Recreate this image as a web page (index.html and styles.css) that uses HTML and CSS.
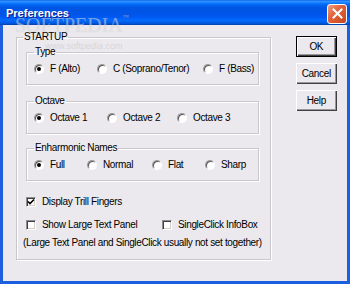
FILE: index.html
```html
<!DOCTYPE html>
<html>
<head>
<meta charset="utf-8">
<link rel="stylesheet" href="styles.css">
</head>
<body>
<div class="window">
  <div class="titlebar">
    <span class="title">Preferences</span>
    <span class="close"><svg width="11" height="11" viewBox="0 0 11 11"><path d="M1.5 1.5 L9.5 9.5 M9.5 1.5 L1.5 9.5" stroke="#fff" stroke-width="2" stroke-linecap="square"/></svg></span>
  </div>
  <div class="client">
    <fieldset class="group outer">
      <legend>STARTUP</legend>
      <fieldset class="group inner g-type">
        <legend>Type</legend>
        <div class="radios">
          <label class="opt w63"><span class="radio on"></span>F (Alto)</label>
          <label class="opt w106"><span class="radio"></span>C (Soprano/Tenor)</label>
          <label class="opt"><span class="radio"></span>F (Bass)</label>
        </div>
      </fieldset>
      <fieldset class="group inner g-octave">
        <legend>Octave</legend>
        <div class="radios">
          <label class="opt w73"><span class="radio on"></span>Octave 1</label>
          <label class="opt w70"><span class="radio"></span>Octave 2</label>
          <label class="opt"><span class="radio"></span>Octave 3</label>
        </div>
      </fieldset>
      <fieldset class="group inner g-enh">
        <legend>Enharmonic Names</legend>
        <div class="radios">
          <label class="opt w53"><span class="radio on"></span>Full</label>
          <label class="opt w65"><span class="radio"></span>Normal</label>
          <label class="opt w53"><span class="radio"></span>Flat</label>
          <label class="opt"><span class="radio"></span>Sharp</label>
        </div>
      </fieldset>
      <div class="check-row first">
        <label class="opt"><span class="checkbox"><svg width="8" height="8" viewBox="0 0 8 8"><path d="M1 3.5 L3 5.5 L7 1.5" stroke="#000" stroke-width="1.6" fill="none"/></svg></span>Display Trill Fingers</label>
      </div>
      <div class="check-row second">
        <label class="opt w136"><span class="checkbox"></span>Show Large Text Panel</label>
        <label class="opt"><span class="checkbox"></span>SingleClick InfoBox</label>
      </div>
      <p class="note">(Large Text Panel and SingleClick usually not set together)</p>
    </fieldset>
    <div class="buttons">
      <button class="btn default">OK</button>
      <button class="btn">Cancel</button>
      <button class="btn">Help</button>
    </div>
  </div>
  <span class="wm wm-top">SOFTPEDIA<sup>™</sup></span>
  <span class="wm-url">www.softpedia.com</span>
</div>
</body>
</html>
```
FILE: styles.css
```css
* { box-sizing: border-box; }
html, body { margin: 0; padding: 0; }
body {
  width: 350px;
  height: 284px;
  overflow: hidden;
  font-family: "Liberation Sans", Arial, sans-serif;
  font-size: 10px;
  letter-spacing: -0.35px;
  color: #000;
}
.window {
  position: relative;
  width: 350px;
  height: 284px;
  display: flex;
  flex-direction: column;
  background: #1c5fe0;
}
.titlebar {
  height: 25px;
  flex: none;
  display: flex;
  align-items: center;
  justify-content: space-between;
  padding: 0 3px 0 6px;
  background: linear-gradient(to bottom, #0058ee 0%, #3593ff 4%, #288eff 8%, #127dff 12%, #036ffc 16%, #0262ee 22%, #0057e5 30%, #0054e3 40%, #0055eb 60%, #005bf5 70%, #026afe 80%, #0062ef 88%, #0052d6 94%, #0040ab 100%);
}
.title {
  color: #fff;
  font-weight: bold;
  font-size: 11px;
  letter-spacing: 0;
  text-shadow: 1px 1px 0 #0a1e8c;
  margin-top: 1px;
}
.close {
  width: 20px;
  height: 20px;
  margin-top: 2px;
  border: 1px solid #fff;
  border-radius: 3px;
  background: linear-gradient(135deg, #f0a080 0%, #e2643c 40%, #c8451e 100%);
  display: flex;
  align-items: center;
  justify-content: center;
}
.client {
  flex: 1;
  margin: 0 3px 3px;
  background: #ebe9ed;
  display: flex;
  align-items: flex-start;
  padding: 6px 0 0 13px;
}
.group {
  margin: 0;
  border: 1px solid #c9c6cc;
  box-shadow: inset 1px 1px 0 #fff, 1px 1px 0 #fff;
}
.group legend {
  padding: 0 1px;
  line-height: 12px;
  font-size: 10px;
}
.outer {
  width: 252px;
  height: 229px;
  padding: 3px 8px 0 6px;
}
.inner {
  width: 233px;
  height: 39px;
  margin-left: 3px;
  padding: 5px 0 0 7px;
}
.g-octave { margin-top: 10px; }
.g-enh { margin-top: 8px; }
.radios { display: flex; }
.opt {
  display: flex;
  align-items: center;
  line-height: 12px;
  white-space: nowrap;
  gap: 6px;
  flex: none;
}
.w53 { width: 53px; }
.w63 { width: 63px; }
.w65 { width: 65px; }
.w70 { width: 70px; }
.w73 { width: 73px; }
.w106 { width: 106px; }
.w136 { width: 136px; }
.radio {
  width: 10px;
  height: 10px;
  border-radius: 50%;
  background: #fff;
  border: 1px solid;
  border-color: #9a989c #fff #fff #9a989c;
  box-shadow: inset 1px 1px 0 #555;
  display: flex;
  align-items: center;
  justify-content: center;
  flex: none;
}
.radio.on::after {
  content: "";
  width: 4px;
  height: 4px;
  border-radius: 50%;
  background: #000;
}
.checkbox {
  width: 10px;
  height: 10px;
  background: #fff;
  border: 1px solid;
  border-color: #8f8d91 #fff #fff #8f8d91;
  box-shadow: inset 1px 1px 0 #404040, inset -1px -1px 0 #d4d0c8;
  display: flex;
  align-items: center;
  justify-content: center;
  flex: none;
}
.check-row {
  display: flex;
  margin-left: 3px;
}
.check-row.first { margin-top: 15px; }
.check-row.second { margin-top: 11px; }
.note {
  margin: 6px 0 0 0;
  line-height: 12px;
  white-space: nowrap;
}
.buttons {
  display: flex;
  flex-direction: column;
  gap: 6px;
  margin: 5px 0 0 25px;
}
.btn {
  width: 41px;
  height: 21px;
  padding: 0;
  font: inherit;
  letter-spacing: -0.35px;
  color: #000;
  background: #ebe9ed;
  border: none;
  box-shadow: inset 1px 1px 0 #fff, inset -1px -1px 0 #404040, inset -2px -2px 0 #9a989c;
}
.btn.default {
  border: 1px solid #000;
}
.wm {
  position: absolute;
  font-family: "Liberation Serif", serif;
  font-size: 20px;
  letter-spacing: 0;
  color: rgba(255, 255, 255, 0.35);
  text-shadow: 0 0 1px rgba(150, 150, 160, 0.35);
  pointer-events: none;
}
.wm sup { font-size: 6px; vertical-align: top; }
.wm-top { left: 15px; top: 14px; }
.wm-url {
  position: absolute;
  left: 45px;
  top: 41px;
  font-size: 9px;
  letter-spacing: 0;
  color: rgba(170, 170, 175, 0.35);
  pointer-events: none;
}
```
